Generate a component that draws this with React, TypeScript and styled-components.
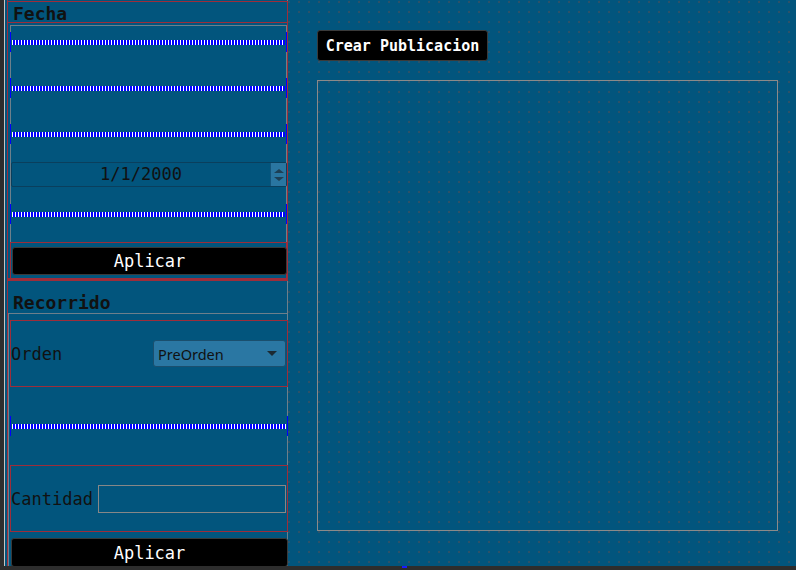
import React from "react";
import styled, { createGlobalStyle } from "styled-components";

const BG = "#02557d";
const RED = "#9e2d3a";
const GRAY = "#6d7f8b";
const MONO = `"DejaVu Sans Mono", "Liberation Mono", monospace`;

const Global = createGlobalStyle`
  html, body { margin: 0; padding: 0; background: ${BG}; overflow: hidden; }
  * { box-sizing: border-box; }
`;

const Page = styled.div`
  width: 796px;
  height: 570px;
  display: flex;
  flex-direction: column;
  background: ${BG};
  overflow: hidden;
`;

const Main = styled.div`
  height: 566px;
  display: flex;
  overflow: hidden;
`;

const Ruler = styled.div`
  width: 5px;
  flex: none;
  background: #2d2d2d;
  border-right: 1px solid #c4c4c4;
`;

const LeftPanel = styled.div`
  width: 281px;
  flex: none;
  margin-left: 2px;
  display: flex;
  flex-direction: column;
  border-left: 1px solid ${RED};
  border-right: 1px solid ${GRAY};
`;

const SectionHeader = styled.div<{ $boxed?: boolean }>`
  height: ${(p) => (p.$boxed ? "22px" : "32px")};
  margin: ${(p) => (p.$boxed ? "1px -1px 0" : "0")};
  border: ${(p) => (p.$boxed ? `1px solid ${RED}` : "none")};
  padding: ${(p) => (p.$boxed ? "3px 0 0 5px" : "13px 0 0 5px")};
  font: bold 18px/18px ${MONO};
  color: #111;
  flex: none;
`;

const FechaBody = styled.div`
  margin: 0 -1px;
  border: 1px solid ${RED};
  border-top: none;
  border-bottom-width: 3px;
  padding: 2px 0 0 2px;
  display: flex;
  flex-direction: column;
  flex: none;
`;

const FieldStack = styled.div`
  height: 217px;
  border: 1px solid ${GRAY};
  border-bottom: none;
  padding-top: 6px;
  display: flex;
  flex-direction: column;
`;

const Slider = styled.div<{ $gap?: number; $shift?: number }>`
  height: 20px;
  flex: none;
  margin-top: ${(p) => p.$gap ?? 0}px;
  margin-left: ${(p) => p.$shift ?? -1}px;
  margin-right: -1px;
  border-left: 1px solid #0000ff;
  border-right: 1px solid #0000ff;
  display: flex;
  align-items: center;
  padding: 0 1px;
`;

const Ticks = styled.div`
  height: 5px;
  flex: 1;
  background: repeating-linear-gradient(
    90deg,
    #ffffff 0px,
    #ffffff 1.5px,
    #0000ff 1.5px,
    #0000ff 3px
  );
`;

const DatePicker = styled.div<{ $gap: number }>`
  height: 25px;
  margin-top: ${(p) => p.$gap}px;
  margin-right: -1px;
  border: 1px solid #0a3f5d;
  border-radius: 2px;
  display: flex;
  flex: none;
`;

const DateText = styled.div`
  flex: 1;
  text-align: center;
  font: 17px/23px ${MONO};
  color: #111;
`;

const Spinner = styled.div`
  width: 16px;
  background: #2a76a1;
  border-left: 1px solid #14557b;
  display: flex;
  flex-direction: column;
  align-items: center;
  justify-content: center;
  gap: 4px;
`;

const Arrow = styled.div<{ $up?: boolean }>`
  width: 0;
  height: 0;
  border-left: 5px solid transparent;
  border-right: 5px solid transparent;
  ${(p) =>
    p.$up
      ? "border-bottom: 4px solid #1d3f55;"
      : "border-top: 4px solid #1d3f55;"}
`;

const ButtonBox = styled.div`
  height: 36px;
  border: 1px solid ${RED};
  border-bottom: none;
  padding: 4px 0 0 1px;
  flex: none;
`;

const BlackButton = styled.button<{ $w: number; $h: number; $bold?: boolean; $size: number }>`
  width: ${(p) => p.$w}px;
  height: ${(p) => p.$h}px;
  flex: none;
  background: #000;
  color: #fff;
  border: 1px solid #3a3a3a;
  border-radius: 3px;
  font: ${(p) => (p.$bold ? "bold " : "")}${(p) => p.$size}px ${MONO};
  padding: 0;
  margin: 0;
  display: flex;
  align-items: center;
  justify-content: center;
`;

const RecorridoBody = styled.div`
  flex: 1;
  border-top: 1px solid ${GRAY};
  border-left: 1px solid ${GRAY};
  display: flex;
  flex-direction: column;
  min-height: 0;
`;

const FieldBox = styled.div<{ $gap: number }>`
  height: 67px;
  flex: none;
  margin: ${(p) => p.$gap}px -1px 0 1px;
  border: 1px solid ${RED};
  display: flex;
  align-items: center;
  padding-right: 1px;
`;

const Label = styled.span`
  font: 17px/20px ${MONO};
  color: #111;
  flex: none;
`;

const Combo = styled.div`
  margin-left: auto;
  width: 133px;
  height: 27px;
  background: #2a77a3;
  border: 1px solid #1a4f6e;
  border-radius: 3px;
  display: flex;
  align-items: center;
  padding: 0 8px 0 4px;
  font: 14.5px "Noto Sans", "Open Sans", sans-serif;
  color: #111;
`;

const ComboText = styled.span`
  flex: 1;
`;

const ComboArrow = styled.div`
  width: 0;
  height: 0;
  border-left: 5px solid transparent;
  border-right: 5px solid transparent;
  border-top: 5px solid #1b2a33;
`;

const TextBox = styled.div`
  flex: 1;
  height: 28px;
  margin-left: 5px;
  border: 1px solid #878787;
`;

const ButtonRow = styled.div`
  margin: 6px 0 0 2px;
  flex: none;
`;

const Canvas = styled.div`
  flex: 1;
  padding: 30px 0 0 29px;
  background-color: ${BG};
  background-image: radial-gradient(circle at 1px 1px, #2c5269 0.8px, transparent 1.2px);
  background-size: 10px 10px;
  background-position: 0 1px;
  display: flex;
  flex-direction: column;
`;

const Frame = styled.div`
  width: 461px;
  height: 451px;
  margin-top: 19px;
  border: 1px solid #8a8a8a;
`;

const BottomBar = styled.div`
  height: 4px;
  background: #2d2d2d;
  display: flex;
`;

const Marker = styled.div`
  width: 5px;
  height: 2px;
  margin-left: 402px;
  background: #1a1aff;
`;

export default function App() {
  return (
    <Page>
      <Global />
      <Main>
        <Ruler />
        <LeftPanel>
          <SectionHeader $boxed>Fecha</SectionHeader>
          <FechaBody>
            <FieldStack>
              <Slider>
                <Ticks />
              </Slider>
              <Slider $gap={26}>
                <Ticks />
              </Slider>
              <Slider $gap={26}>
                <Ticks />
              </Slider>
              <DatePicker $gap={18}>
                <DateText>1/1/2000</DateText>
                <Spinner>
                  <Arrow $up />
                  <Arrow />
                </Spinner>
              </DatePicker>
              <Slider $gap={17}>
                <Ticks />
              </Slider>
            </FieldStack>
            <ButtonBox>
              <BlackButton $w={275} $h={28} $size={17}>
                Aplicar
              </BlackButton>
            </ButtonBox>
          </FechaBody>
          <SectionHeader>Recorrido</SectionHeader>
          <RecorridoBody>
            <FieldBox $gap={6}>
              <Label>Orden</Label>
              <Combo>
                <ComboText>PreOrden</ComboText>
                <ComboArrow />
              </Combo>
            </FieldBox>
            <Slider $gap={29} $shift={1}>
              <Ticks />
            </Slider>
            <FieldBox $gap={29}>
              <Label>Cantidad</Label>
              <TextBox />
            </FieldBox>
            <ButtonRow>
              <BlackButton $w={277} $h={29} $size={17}>
                Aplicar
              </BlackButton>
            </ButtonRow>
          </RecorridoBody>
        </LeftPanel>
        <Canvas>
          <BlackButton $w={171} $h={31} $size={15} $bold>
            Crear Publicacion
          </BlackButton>
          <Frame />
        </Canvas>
      </Main>
      <BottomBar>
        <Marker />
      </BottomBar>
    </Page>
  );
}
